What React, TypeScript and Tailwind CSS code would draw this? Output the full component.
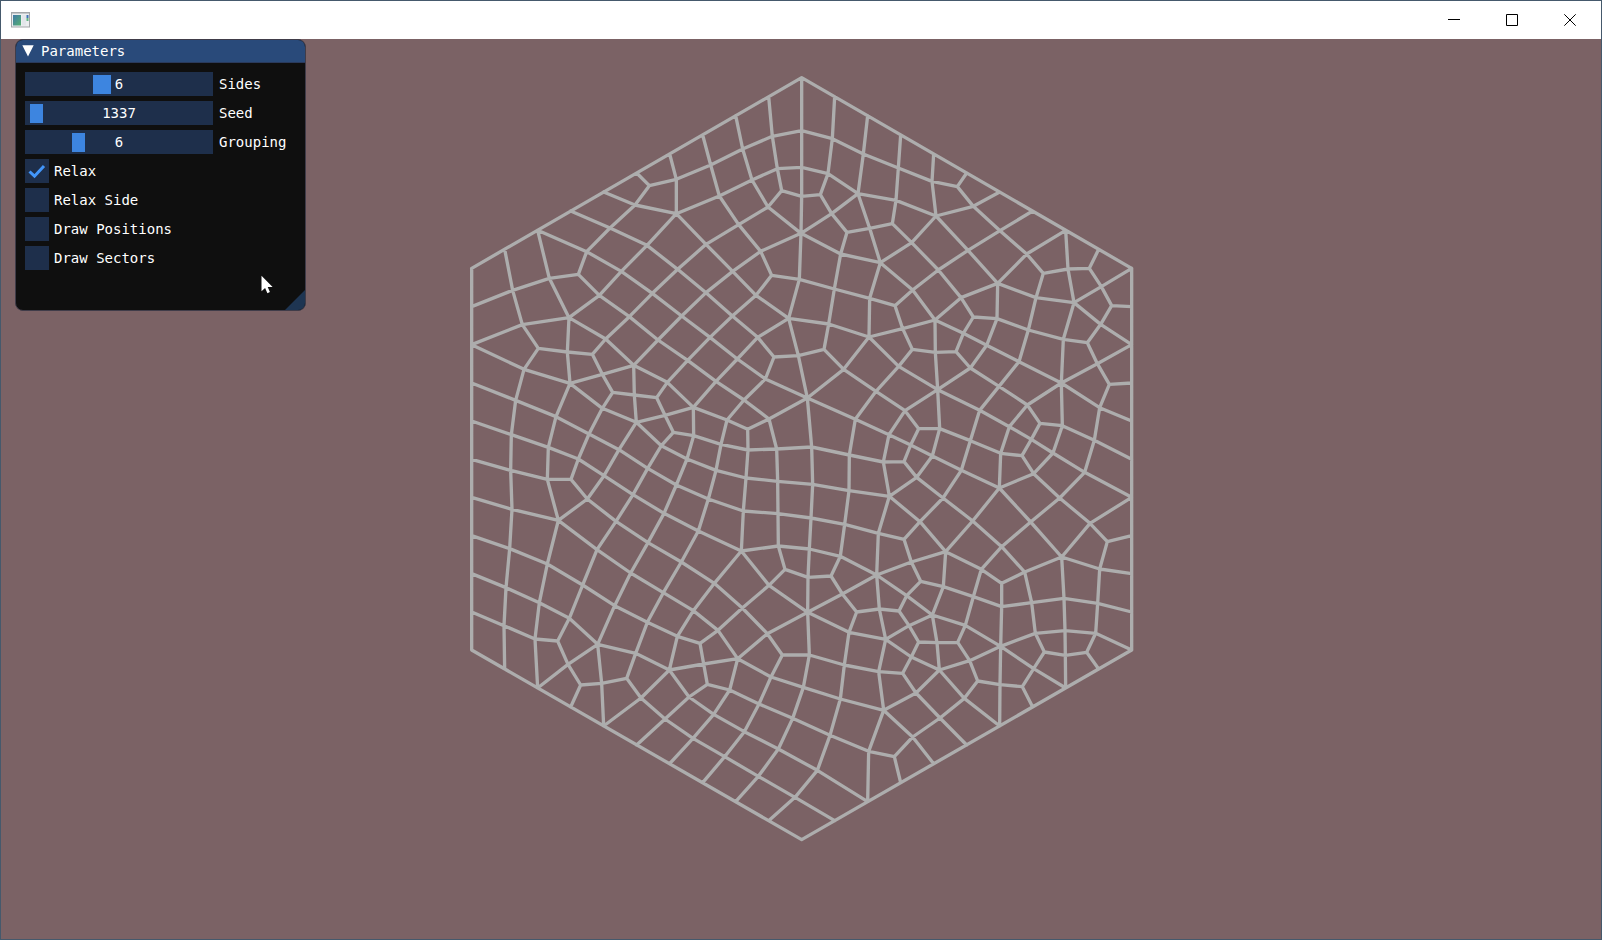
import { useState } from "react";

type Point = [number, number];

const vertexTable = `
a1 158 661 a2 268 625 a3 355 613 a4 380 545 a5 450 474 a6 525 405 a7 568 347 a8 649 328 a9 649 431
a10 752 285 a11 848 237 a12 937 199 a13 778 378 a14 876 330 a15 952 296 a16 965 362 a17 924 411
a18 836 464 a19 738 523 a20 561 526 a21 484 604 a22 418 676 a23 327 743 a24 187 764 a25 653 598
a26 818 604 a27 902 544 a28 935 616 a29 888 676 a30 738 668 a31 577 670 a32 508 740 a33 665 738
a34 817 738 a35 986 745 c1 1025 182 c2 1025 292 c3 1025 379 c4 1023 490 c5 1018 628
m1 235 835 m2 322 846 m3 397 853 m4 437 807 m5 594 810 m6 750 802 m7 893 802 m8 942 861 m9 916 927
m10 832 867 m11 683 871 m12 521 886 m13 427 913 m14 330 940 m15 192 898 m16 167 991 m17 288 1040
m18 427 1015 m19 458 967 m20 523 975 m21 590 983 m22 622 937 m23 768 934 m24 852 990 m25 927 1047
m26 700 1012 m27 615 1036 m28 529 1057 m29 387 1092 m30 640 1087 m31 604 1127 m32 701 1097
m33 801 1050 m34 863 1078 m35 783 1123 m36 864 1140 m37 950 1137 m38 154 1094 m39 265 1132
m40 355 1167 m41 477 1139 m42 563 1195 m43 681 1167 m44 768 1201 m45 858 1224 m46 953 1234
m47 152 1201 m48 262 1228 m49 333 1228 m50 432 1217 m51 382 1287 m52 519 1274 m53 649 1245
m54 745 1287 m55 850 1323 m56 954 1331 m57 156 1318 m58 295 1351 m59 468 1354 m60 612 1330
m61 715 1383 m62 844 1443 m63 955 1428 m64 975 1498 m65 927 1546 m66 763 1540 m67 664 1476
m68 564 1418 m69 411 1439 m70 149 1436 m71 262 1482 m72 368 1545 m73 512 1509 m74 138 1553 m75 1015 857
b1 238 1598 b2 328 1645 b3 132 1667 b4 225 1707 b5 293 1713 b6 413 1723 b7 324 1783 b8 362 1845
b9 425 1840 b10 500 1825 b11 527 1750 b12 464 1607 b13 562 1657 b14 610 1568 b15 700 1622
b16 652 1699 b17 720 1720 b18 774 1681 b19 847 1614 b20 922 1691 b21 967 1755 b22 833 1766
b23 731 1782 b24 628 1800 b25 742 1843 b26 687 1881 b27 809 1860 b28 543 1884 b29 615 1947
b30 761 1933 b31 897 1902 b32 933 1821 b33 699 2005 b34 794 2060 b35 853 1985 b36 998 1945
b37 955 2037 b38 895 2119 b39 1005 2182
d1 1117 206 d2 1210 252 d3 1315 294 d4 1416 334 d5 1492 350 d6 1104 311 d7 1194 371 d8 1308 391
d9 1428 438 d10 1540 409 d11 1081 374 d12 1115 431 d13 1161 487 d14 1229 475 d15 1297 461
d16 1355 518 d17 1142 552 d18 1261 578 d19 1435 600 d20 1524 541 d21 1620 482 d22 1700 552
d23 1750 610 d24 1824 597 d25 1888 595 d26 1924 650 d27 1955 707 d28 1842 698 d29 1728 683
d30 1613 640 d31 1503 683 d32 1358 660 d33 1123 657 d34 1229 685 d35 1305 707 d36 1425 750
d37 1540 741 d38 1611 746 d39 1106 762 d40 1922 763 d41 1705 780 d42 1328 776 d43 1510 790 d44 1810 808
e1 1227 801 e2 1092 838 e3 1151 898 e4 1042 984 e5 1357 838 e6 1426 847 e7 1488 845 e8 1580 826
e9 1531 894 e10 1316 889 e11 1433 959 e12 1248 964 e13 1186 1048 e14 1335 1022 e15 1376 1076
e16 1439 1076 e17 1352 1125 e18 1287 1094 e19 1417 1158 e20 1332 1175 e21 1270 1176 e22 1370 1222
e23 1288 1279 e24 1168 1155 e25 1055 1131 e26 1058 1243 e27 1167 1262 e28 1053 1344 e29 1154 1363
e30 1255 1390 e31 1332 1408 e32 1048 1437 e33 1141 1459 e34 1113 1518 e35 1044 1522 e36 1250 1515
e37 1354 1476 e38 1382 1534 e39 1450 1550 e40 1457 1445 e41 1380 1355 e42 1449 1284 e43 1504 1201
e44 1531 1112 e45 1559 1021 e46 1617 949 e47 1677 875 e48 1702 1005 e49 1648 1070 e50 1622 1150
e51 1618 1254 e52 1538 1353 e53 1625 1430 e54 1564 1498 e55 1625 1540 e56 1694 1506 e57 1712 1356
e58 1721 1211 e59 1686 1157 e60 1714 1108 e61 1740 1060 e62 1807 1067 e63 1779 1149 e64 1804 939
e65 1882 818 e66 1912 881 e67 1948 943 e68 1919 1013 e69 1903 1111 e70 1874 1207 e71 1799 1284
e72 1890 1360 e73 1942 1415 e74 1919 1497 e75 1805 1461
g1 1043 1627 g2 1147 1572 g3 1190 1626 g4 1258 1617 g5 1317 1623 g6 1340 1577 g7 1417 1635
g8 1347 1667 g9 1277 1708 g10 1167 1687 g11 1048 1755 g12 1153 1785 g13 1256 1805 g14 1328 1810
g15 1354 1761 g16 1376 1716 g17 1431 1718 g18 1493 1717 g19 1516 1666 g20 1540 1580 g21 1625 1610
g22 1715 1598 g23 1812 1585 g24 1913 1600 g25 1907 1690 g26 1815 1682 g27 1726 1690 g28 1622 1729
g29 1529 1772 g30 1438 1800 g31 1368 1869 g32 1271 1921 g33 1141 1887 g34 1030 1852 g35 1110 1996
g36 1226 2044 g37 1303 2060 g38 1358 2001 g39 1440 1944 g40 1513 1885 g41 1553 1833 g42 1620 1844
g43 1687 1850 g44 1721 1796 g45 1753 1746 g46 1816 1756 g47 1880 1747 g48 1072 2101
`;

const chains = `
T0 c1 c2 c3 c4 c5 a35|L1 a1 a2 a3 a22|P1 a1 a24 m1|P2 a2 a23|P2 a4 a21 a31 a33|a3 a4 a5 a6 a7 a8
a7 P5|P4 a6 a9|P6 a8 a9|P3 a5 a20 a25 a30 a34|a9 a20 a21 a22 a23|a8 a10 a11 a12 c1|a9 a13 a14 a15 c2
P7 a10 a13|P8 a11 a14|P9 a12 a15 a16 c3|a16 a17|a14 a17 c4|a13 a18 a27 a28 c5|a17 a18 a19 a25 a31 a32
a9 a19 a26 a29 a35|c4 a27 a26 a30 a33|a28 a29 a34|a23 a24 L2|L2 m15 m14|m15 m1 m2 m3|a23 m2 m14
m3 m13 m19 m20 m21 m27 m30 m32|a23 m4 m12|a32 m4 m3|m14 m13 m12 m20 m28|m14 m18 m28
m19 m18 m29 m40 m49 m48|m21 m22|m12 m22 m26|m5 m12|a33 m5|a22 a32 m5 m11 m23 m24 m25
m22 m11 m6 a34|a33 m6 m10 m9 e4|a34 m7 m8 m75 e2|a35 m7 m10 m23 m26|m8 m9 m24 m33
m26 m33 m34 m25 e4|m26 m32|m28 m27 m26|m28 m31 m43|m30 m31 m42|m32 m35 m36 m37 e25
m33 m35 m44 m54 m61 m67|m34 m36 m45 m55 m62|m25 m37 m46 m56 m63 m64|m32 m43 m53 m60 m68 m73
m43 m44 m45 m46 e26|m28 m41 m50 m51|m42 m52 m59 m69 m72|m14 m17 m39 m48 m58
m15 m16 m38 m47 m57 m70 m74 b3 Q1|L3 m16 m17 m29 m41 m42 m53 m54 m55 m56 e28
L4 m38 m39 m40 m50 m52 m60 m61 m62|L5 m47 m48|m49 m51 m59 m68 m67 m66|m51 m58
L6 m57 m58 m69 m73 b14|m58 m71 b1 b4 Q2|L7 m70 m71 m72 b12 b13 b16 b17|m72 b2 b5
L8 m74 b1 b2 b6|L9 b3 b4 b5 b7 b8 Q3|b6 b7 Q2|b6 b9 Q4|b8 b9 b10 b11 b13 b14 m67|b6 b11 b24
b6 b12 m73|b10 b28 b29 b33 b34 b38 b39 S9|Q4 b28 b24|b24 b16 b15 m66|b24 b23 b22
b18 b17 b23 b25 b27|b14 b15 b18 b22|b24 b26 b30 b35 b37 g48|b25 b26 b29 Q5|b22 b27 b30 b33 Q6
b27 b31 b36 g35|b22 b32 g34|b22 b20 g1|b18 b19 m65|m66 b19 b20 b21 g11|m66 m62 m63 e32|m62 m65 g1
m65 m64 e35|b21 b32 b31 b35 b34 Q7|g34 b36 b37 b38 Q8|b39 Q9
a35 m75 e4|c1 d1 d2 d3 d4 d5 d10 d21 d22 d23 d24 d25 d26 d27 R1|d5 T5|T1 d1 d6 d11 c3
c2 d6 d7 d8 d9 d10 T6|d11 d12 d13|T2 d2 d7 d12 c4|d7 d14 d18|d13 d14 d15 d8 d3 T3|T4 d4 d9
c4 d17 d18|d13 d17 d33 d39 e2|d15 d16 d19 d31 d37|d9 d16 d18|d9 d20 d30|d18 d34 e1|d18 d32 d36
T7 d21 d20 d19 d32 d35|T8 d22 d30|T8 d24 d28|T9 d25|T10 d26 d28|c5 d33 d34 d35 d42 e5
d30 d31 d36|d30 d29 d28|d23 d29 d41 e47|d30 d38 e8|d37 d38 d41 d44 e65 d40 d27|d37 d43 e7
d28 d40 R2|d28 d44 e64|d36 d42 e1|d36 e6|d36 d43 e8 e47 e64|a35 d39 e1|e2 e3|e4 e3 e1
e3 e12 e14 e15|e4 e13 e18 e17 e19 e43 e51|e1 e10 e11|e5 e10 e12 e13 e24 e27 e29 e33 e34
e5 e6 e7 e9 e46 e48 e61|e6 e11 e16|e11 e9 e8|e11 e14 e18 e21 e23|e15 e16 e44 e50 e59
e15 e17 e20 e21|e16 e19 e22 e23|e20 e22 e42 e52 e53 e56|e4 e25 e26 e28 e32 e35|e25 e24 e21
e26 e27 e23|e28 e29 e30 e31|e32 e33 e36|e35 e34|e23 e30 e36|e23 e41 e40
e31 e41 e42 e43 e44 e45 e46 e47|e31 e37 e38 e39|e36 e37 e40 e54 e55|e11 e45 e49 e60 e63 e70 R6
e48 e49 e50 e51|e61 e62 e69 R5|e61 e60 e59 e58|e62 e63 e58 e51|e62 e64 e48|e64 e68 R4|e64 e66 R2
e65 e66 e67 e68 e69 e70 e71 e57 e53 e54|e67 R3|e58 e71 e72 e73 R7|e51 e57 e75|e51 e52 e40
e75 e72 R6|e75 e56 e55|e75 e74 R8|e73 e74|e40 e39
g1 g2 e36|e34 g2 g3 g4 g5 g6 e38|e35 g1 g11 g34|g3 g10 g12 g33 g35 g48 b39|g1 g10 g9
e36 g4 g9 g13 g32|e36 g6 g7|e39 g7|e39 g20 g21|e54 g20 g19|e55 g21 g28|e56 g22|e75 g23|e74 g24
g21 g22 g23 g24 R9|g5 g8 g16|g9 g8 g7 g19 g28|g9 g15 g30|g16 g17 g18 g19|g7 g17 g30
g16 g15 g14|g11 g12 g13 g14|g14 g31 g39 S5|g30 g31 g32|g30 g40 S4|g30 g29 g28
g18 g29 g41 g40 g39 g38 g37|g41 g42 g43 g44 g45|g43 S3|g28 g42 S4|g28 g44 S2|g28 g27
g22 g27 g45 g46 g47|g27 g26 g25 S0|g23 g26 g46 S2|g24 g25 g47 S1|g34 g33 g32|g35 g36 g37
g32 g36 S8|g32 g38 S6|g37 S7|g48 S8
P0 T0 T10 S0 Q10 Q0 P0
`;

function buildVertices() {
  const vertices: Record<string, Point> = {};
  const tokens = vertexTable.trim().split(/\s+/);
  for (let i = 0; i < tokens.length; i += 3) {
    vertices[tokens[i]] = [Number(tokens[i + 1]), Number(tokens[i + 2])];
  }
  const topLeft: Point = [35, 595];
  const top: Point = [1025, 23];
  const topRight: Point = [2015, 595];
  const bottomRight: Point = [2015, 1740];
  const bottom: Point = [1025, 2309];
  const bottomLeft: Point = [35, 1740];
  const edges: [string, Point, Point][] = [
    ["P", topLeft, top],
    ["T", top, topRight],
    ["L", topLeft, bottomLeft],
    ["R", topRight, bottomRight],
    ["Q", bottomLeft, bottom],
    ["S", bottomRight, bottom],
  ];
  for (const [name, from, to] of edges) {
    for (let k = 0; k <= 10; k++) {
      vertices[name + k] = [
        Math.round(from[0] + ((to[0] - from[0]) * k) / 10),
        Math.round(from[1] + ((to[1] - from[1]) * k) / 10),
      ];
    }
  }
  return vertices;
}

function buildMeshPath() {
  const vertices = buildVertices();
  return chains
    .trim()
    .split(/[|\n]/)
    .map((chain) => "M" + chain.trim().split(" ").map((id) => vertices[id].join(" ")).join("L"))
    .join("");
}

const meshPath = buildMeshPath();

function Mesh() {
  return (
    <svg viewBox="3 0 2040 2340" className="h-auto w-[680px] max-w-full" role="img" aria-label="Hexagon grid">
      <path d={meshPath} fill="none" stroke="#adadad" strokeWidth="10" strokeLinejoin="round" strokeLinecap="round" />
    </svg>
  );
}

interface SliderRowProps {
  id: string;
  label: string;
  min: number;
  max: number;
  initial: number;
  wide?: boolean;
}

function SliderRow({ id, label, min, max, initial, wide }: SliderRowProps) {
  const [value, setValue] = useState(initial);
  const thumb = wide ? "[&::-webkit-slider-thumb]:w-[18px]" : "[&::-webkit-slider-thumb]:w-[13px]";
  return (
    <div className="flex h-6 items-center gap-[6px]">
      <div className="grid w-[188px] items-center">
        <input
          id={id}
          type="range"
          min={min}
          max={max}
          value={value}
          onChange={(e) => setValue(Number(e.target.value))}
          className={`col-start-1 row-start-1 h-6 w-full appearance-none bg-[#1e2f4b] px-[2px] outline-none [&::-webkit-slider-thumb]:h-[19px] [&::-webkit-slider-thumb]:appearance-none [&::-webkit-slider-thumb]:bg-[#3d85e0] ${thumb}`}
        />
        <output htmlFor={id} className="pointer-events-none z-10 col-start-1 row-start-1 text-center">
          {value}
        </output>
      </div>
      <label htmlFor={id}>{label}</label>
    </div>
  );
}

function CheckRow({ id, label, initial = false }: { id: string; label: string; initial?: boolean }) {
  const [checked, setChecked] = useState(initial);
  return (
    <div className="flex h-6 items-center gap-[5px]">
      <div className="grid size-6">
        <input
          id={id}
          type="checkbox"
          checked={checked}
          onChange={(e) => setChecked(e.target.checked)}
          className="col-start-1 row-start-1 size-6 appearance-none bg-[#1e2f4b] outline-none"
        />
        {checked && (
          <svg viewBox="0 0 24 24" className="pointer-events-none z-10 col-start-1 row-start-1 size-6" aria-hidden="true">
            <path d="M4.5 12.5 9.5 17.2 19 7" fill="none" stroke="#4296fa" strokeWidth="3" />
          </svg>
        )}
      </div>
      <label htmlFor={id}>{label}</label>
    </div>
  );
}

function ParametersPanel() {
  const [open, setOpen] = useState(true);
  return (
    <section className="absolute top-0 left-[14px] w-[291px] overflow-hidden rounded-lg border border-[#403c49] bg-[#0f0f0f] text-[14px] leading-6 text-white">
      <h1 className="border-b border-[#2a3a5c] bg-[#294a7a]">
        <button
          type="button"
          aria-expanded={open}
          onClick={() => setOpen(!open)}
          className="flex h-[22px] w-full items-center gap-[7px] pl-[6px] text-left"
        >
          <svg viewBox="0 0 12 12" className="size-3" aria-hidden="true">
            <path d={open ? "M.3 .3H11.7L6 11.5Z" : "M.3 .3V11.7L11.5 6Z"} fill="#fff" />
          </svg>
          Parameters
        </button>
      </h1>
      {open && (
        <div className="flex flex-col gap-[5px] px-[9px] pt-[9px] pb-10">
          <SliderRow id="sides" label="Sides" min={2} max={12} initial={6} wide />
          <SliderRow id="seed" label="Seed" min={0} max={65535} initial={1337} />
          <SliderRow id="grouping" label="Grouping" min={1} max={20} initial={6} />
          <CheckRow id="relax" label="Relax" initial />
          <CheckRow id="relax-side" label="Relax Side" />
          <CheckRow id="draw-positions" label="Draw Positions" />
          <CheckRow id="draw-sectors" label="Draw Sectors" />
        </div>
      )}
      <svg viewBox="0 0 20 20" className="absolute right-0 bottom-0 size-5" aria-hidden="true">
        <path d="M20 0V20H0Z" fill="#1e3552" />
      </svg>
    </section>
  );
}

function Pointer() {
  return (
    <svg viewBox="0 0 12 19" className="pointer-events-none absolute top-[236px] left-[260px] h-[19px] w-3" aria-hidden="true">
      <path d="M.5 .8V16.2L4.1 12.9 6.4 18.2 8.9 17.1 6.7 12H11.6Z" fill="#fff" />
    </svg>
  );
}

function AppIcon() {
  return (
    <svg viewBox="0 0 19 16" className="h-4 w-[19px]" aria-hidden="true">
      <defs>
        <linearGradient id="pane" x1="0" y1="0" x2="1" y2="1">
          <stop offset="0" stopColor="#4179a8" />
          <stop offset="1" stopColor="#55b070" />
        </linearGradient>
      </defs>
      <rect x=".5" y=".5" width="18" height="14.5" fill="#eceef0" stroke="#a3a6a9" />
      <path d="M1 1.5H18" stroke="#c4c8cb" />
      <rect x="2" y="3" width="8" height="10.5" fill="url(#pane)" />
      <rect x="11" y="3" width="4" height="10.5" fill="#e3e6ea" />
      <rect x="15.5" y="3" width="2" height="3" fill="#3f72b5" />
      <rect x="15.5" y="6" width="2" height="3" fill="#63b582" />
    </svg>
  );
}

const windowButtons = [
  { label: "Minimize", d: "M0 5.5H12" },
  { label: "Maximize", d: "M.5 .5H11.5V11.5H.5Z" },
  { label: "Close", d: "M.3 .3 11.7 11.7M11.7 .3 .3 11.7" },
];

export default function App() {
  return (
    <div className="flex min-h-screen flex-col border border-[#45596c] bg-[#7b6265] font-['DejaVu_Sans_Mono',monospace]">
      <header className="flex h-[38px] items-center justify-between bg-white pl-[10px]">
        <AppIcon />
        <div className="flex h-full">
          {windowButtons.map(({ label, d }) => (
            <button key={label} type="button" aria-label={label} className="flex w-[58px] items-center justify-center pr-1">
              <svg viewBox="0 0 12 12" className="size-3" aria-hidden="true">
                <path d={d} fill="none" stroke="#000" strokeWidth="1" />
              </svg>
            </button>
          ))}
        </div>
      </header>
      <main className="relative flex grow items-start justify-center pt-[31px]">
        <Mesh />
        <ParametersPanel />
        <Pointer />
      </main>
    </div>
  );
}
